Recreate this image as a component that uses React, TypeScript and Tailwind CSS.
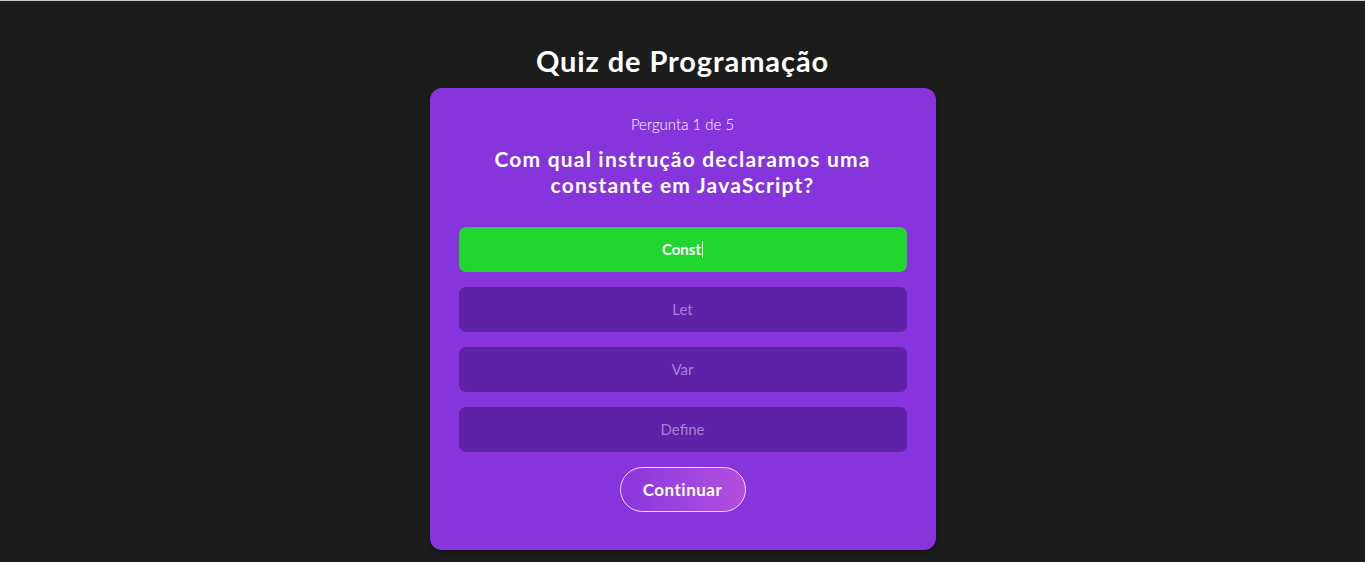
const options = [
  { label: "Const", correct: true },
  { label: "Let", correct: false },
  { label: "Var", correct: false },
  { label: "Define", correct: false },
]

export default function App() {
  return (
    <div
      className="min-h-[562px] bg-[#1c1c1c] border-t border-[#c8c8c8] flex flex-col items-center"
      style={{ fontFamily: "Lato, 'Open Sans', sans-serif" }}
    >
      <h1 className="mt-[42px] text-[29px] leading-[36px] font-bold text-white tracking-[0.9px]">
        Quiz de Programação
      </h1>

      <div className="mt-[9px] w-[506px] h-[462px] rounded-[12px] bg-[#8634db] px-[29px] pt-[26px] flex flex-col items-center shadow-[0_2px_4px_rgba(0,0,0,0.3)]">
        <p className="text-[15px] leading-[20px] font-light text-white">Pergunta 1 de 5</p>
        <h2 className="mt-[12px] w-[420px] text-center text-[21px] leading-[26px] font-bold text-white tracking-[1.2px]">
          Com qual instrução declaramos uma constante em JavaScript?
        </h2>

        <div className="mt-[29px] w-full flex flex-col gap-[15px]">
          {options.map((opt) => (
            <button
              key={opt.label}
              className={
                opt.correct
                  ? "h-[45px] w-full rounded-[7px] bg-[#22d630] text-white text-[15px] font-bold flex items-center justify-center"
                  : "h-[45px] w-full rounded-[7px] bg-[#5e21a7] text-[#a77fd9] text-[15px] font-normal flex items-center justify-center"
              }
            >
              {opt.label}
              {opt.correct && <span className="ml-[1px] inline-block w-px h-[17px] bg-white" />}
            </button>
          ))}
        </div>

        <button className="mt-[15px] h-[45px] w-[126px] rounded-full border border-[#f1d9f7] bg-gradient-to-r from-[#8a36dc] to-[#b44ee0] text-white text-[17px] font-bold tracking-[0.5px]">
          Continuar
        </button>
      </div>
    </div>
  )
}
